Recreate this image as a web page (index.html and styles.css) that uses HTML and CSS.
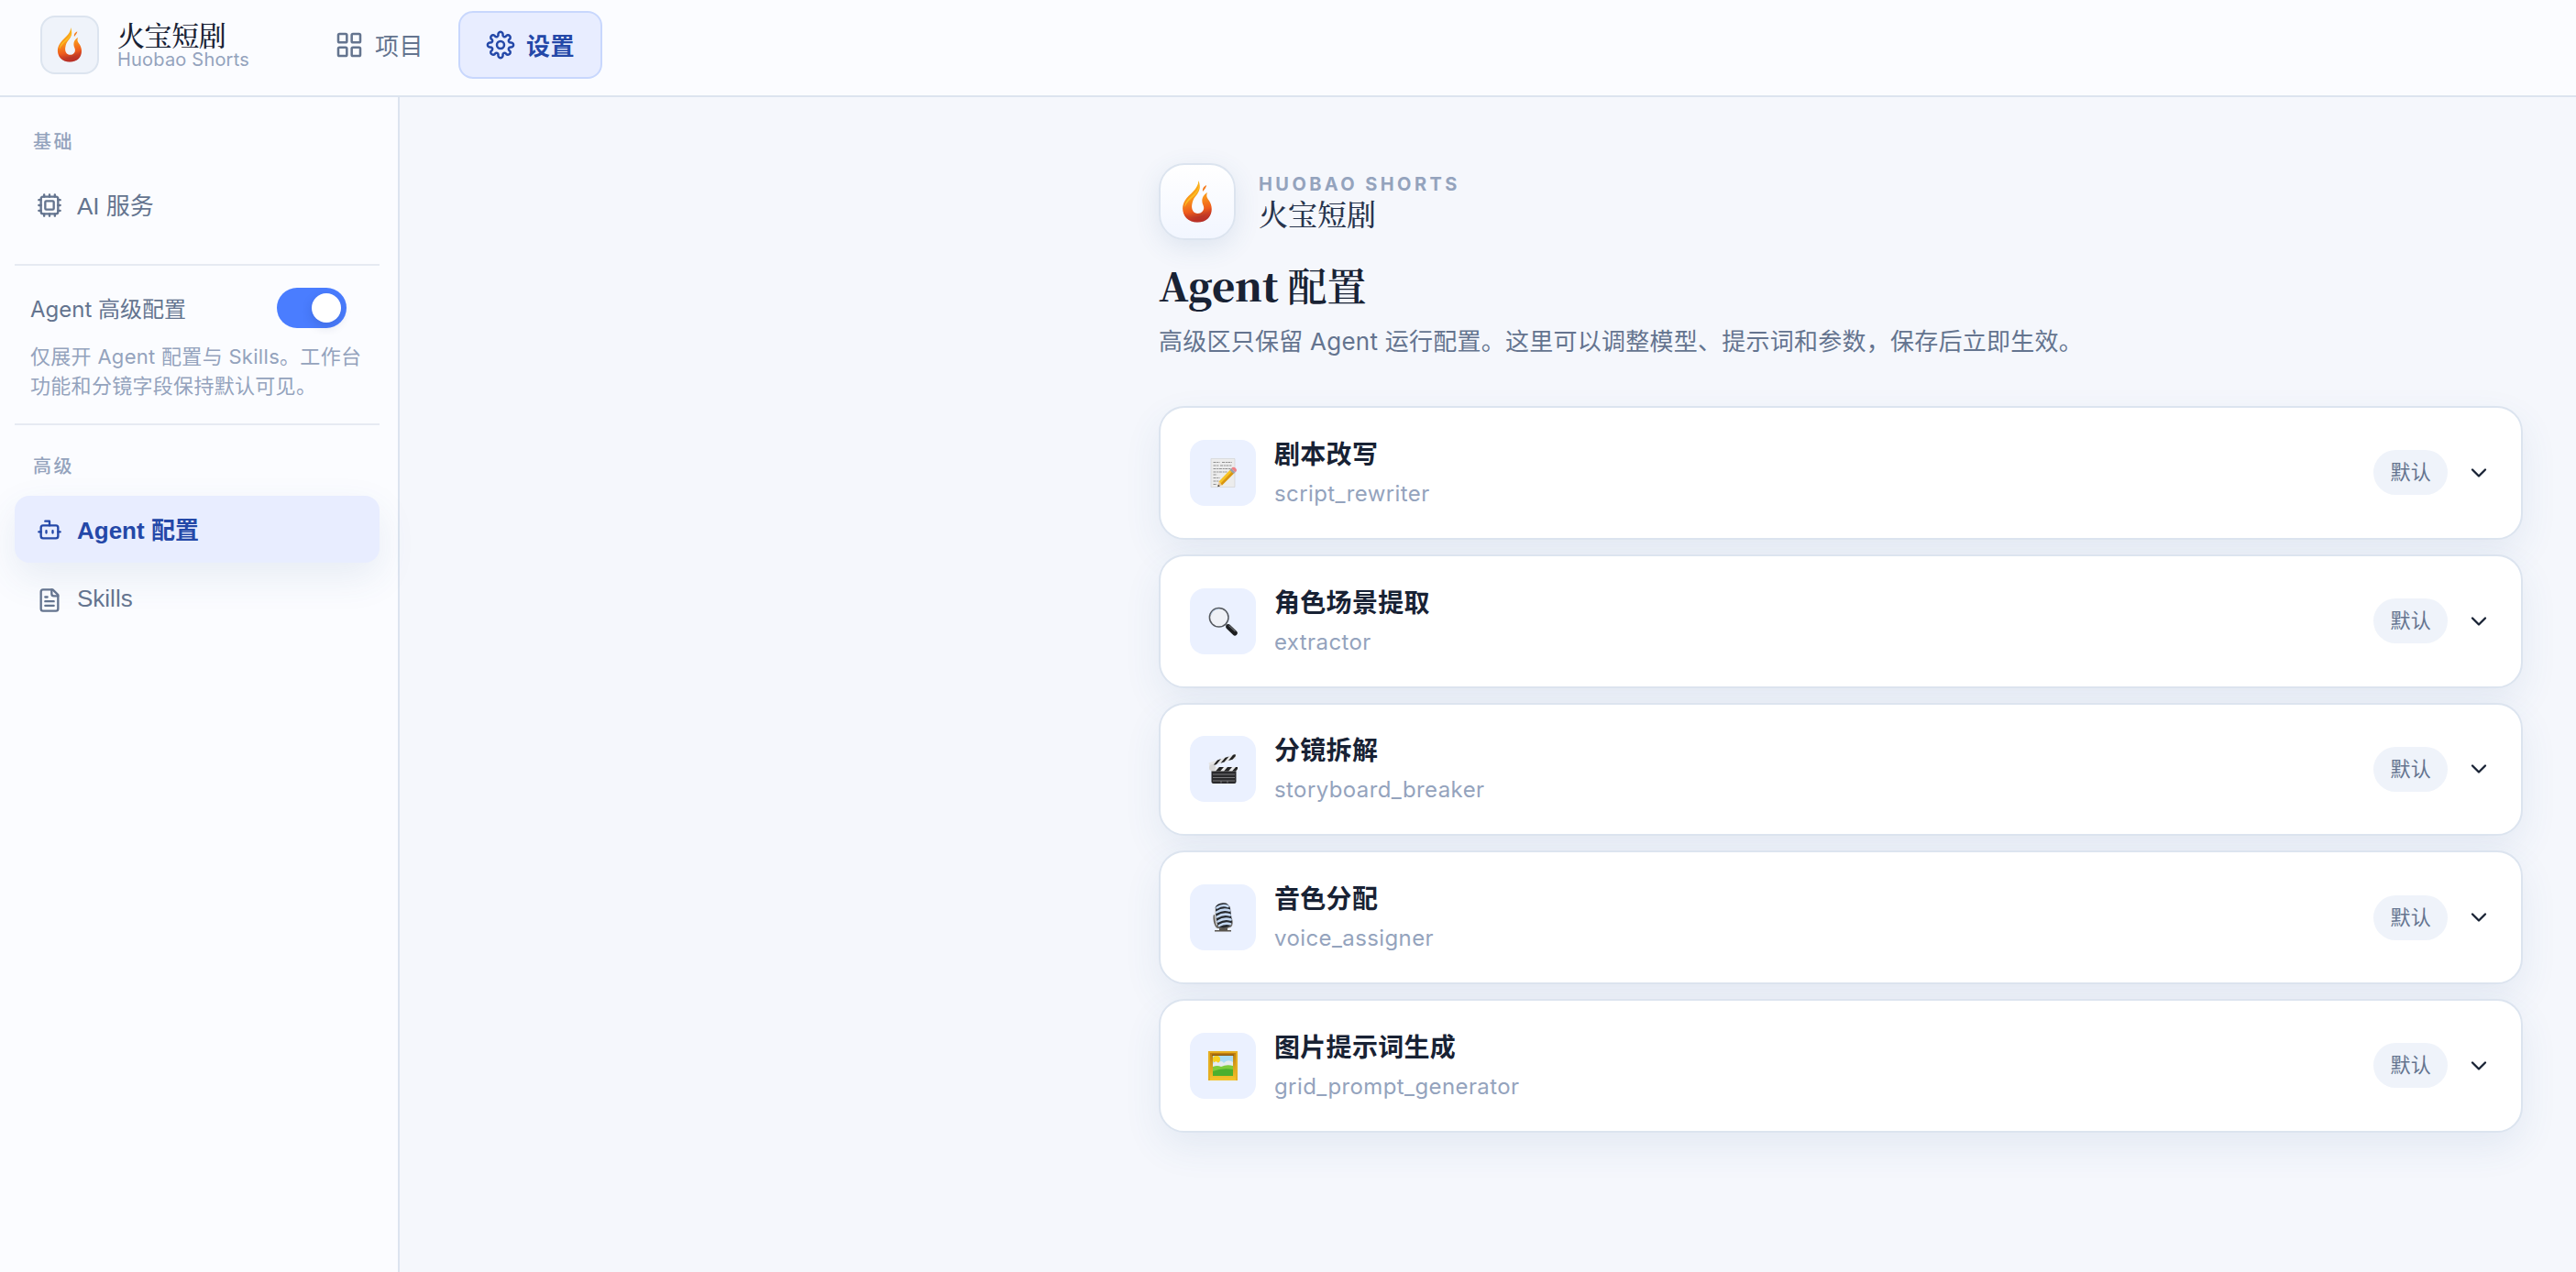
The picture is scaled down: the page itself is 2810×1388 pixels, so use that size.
FILE: index.html
```html
<!DOCTYPE html>
<html lang="zh-CN">
<head>
    <meta charset="UTF-8">
    <meta name="viewport" content="width=device-width, initial-scale=1.0">
    <title>火宝短剧</title>
    <link rel="stylesheet" href="styles.css">
</head>
<body>
    <!-- 公用图标 -->
    <svg class="sprite" width="0" height="0">
        <defs>
            <linearGradient id="fire" x1="0" y1="0" x2="0.15" y2="1">
                <stop offset="0" stop-color="#f9b916"/>
                <stop offset="0.5" stop-color="#f9921a"/>
                <stop offset="0.78" stop-color="#ee5a1c"/>
                <stop offset="1" stop-color="#a52a2c"/>
            </linearGradient>
            <linearGradient id="gold" x1="0" y1="0" x2="0" y2="1">
                <stop offset="0" stop-color="#b9780f"/>
                <stop offset="1" stop-color="#f5c52a"/>
            </linearGradient>
            <symbol id="flame" viewBox="0 0 34 46">
                <path fill="url(#fire)" d="M18.5 0C20 5 20.500 9 18 13C16 17 12.500 19 11.500 25C10 31 12.500 36 17.500 36C23 36 25.500 31 23.500 27C21.500 23 21.500 17 28 13C26.500 17 27.500 19 30 22C36 31 32.500 45.500 17 45.500C3 45.500-2.500 32 3.500 22C8 14.500 18 10 18.500 0Z"/>
                <path fill="#fbbd22" d="M18.500 2C19.500 9 15 13 10.500 17C6 21 3 25 3.500 29C6 22 12 19 15.500 15C19 11 20 7 18.500 2Z"/>
                <path fill="#f47a1c" d="M27 5C27 7 25.500 9 23 12C22.500 9 23.500 7 27 5Z"/>
                <path fill="#d93c1d" d="M2 34C6 41 14 43 22 40C27 38 31 34 32 29C33 39 27 45.500 17 45.500C9 45.500 3.500 41 2 34Z" opacity="0.4"/>
            </symbol>
            <symbol id="chevron" viewBox="0 0 24 24">
                <path d="m6 9 6 6 6-6"/>
            </symbol>
        </defs>
    </svg>

    <header class="topbar">
        <div class="brand">
            <div class="brand-logo"><svg class="flame-sm"><use href="#flame"/></svg></div>
            <div class="brand-text">
                <span class="brand-name">火宝短剧</span>
                <span class="brand-sub">Huobao Shorts</span>
            </div>
        </div>
        <nav class="nav">
            <a class="nav-item">
                <svg class="icon" viewBox="0 0 24 24"><rect x="3" y="3" width="7" height="7" rx="1"/><rect x="14" y="3" width="7" height="7" rx="1"/><rect x="14" y="14" width="7" height="7" rx="1"/><rect x="3" y="14" width="7" height="7" rx="1"/></svg>
                <span>项目</span>
            </a>
            <a class="nav-item active">
                <svg class="icon gear" viewBox="-16 -16 32 32"><path d="M-2.47-10.72A2.6 2.6 0 1 1 2.47-10.72A2 2 0 0 0 5.83-9.33A2.6 2.6 0 1 1 9.33-5.83A2 2 0 0 0 10.72-2.47A2.6 2.6 0 1 1 10.72 2.47A2 2 0 0 0 9.33 5.83A2.6 2.6 0 1 1 5.83 9.33A2 2 0 0 0 2.47 10.72A2.6 2.6 0 1 1-2.47 10.72A2 2 0 0 0-5.83 9.33A2.6 2.6 0 1 1-9.33 5.83A2 2 0 0 0-10.72 2.47A2.6 2.6 0 1 1-10.72-2.47A2 2 0 0 0-9.33-5.83A2.6 2.6 0 1 1-5.83-9.33A2 2 0 0 0-2.47-10.72Z"/><circle r="4"/></svg>
                <span>设置</span>
            </a>
        </nav>
    </header>

    <div class="layout">
        <aside class="sidebar">
            <div class="side-label">基础</div>
            <a class="side-item">
                <svg class="icon" viewBox="0 0 24 24"><rect x="4" y="4" width="16" height="16" rx="2"/><rect x="8" y="8" width="8" height="8" rx="1"/><path d="M12 2v2M7 2v2M17 2v2M12 20v2M7 20v2M17 20v2M2 12h2M2 7h2M2 17h2M20 12h2M20 7h2M20 17h2"/></svg>
                <span>AI 服务</span>
            </a>
            <div class="advanced">
                <div class="advanced-row">
                    <span class="advanced-title">Agent 高级配置</span>
                    <span class="switch"><span class="knob"></span></span>
                </div>
                <p class="advanced-desc">仅展开 Agent 配置与 Skills。工作台<br>功能和分镜字段保持默认可见。</p>
            </div>
            <div class="side-label">高级</div>
            <a class="side-item active">
                <svg class="icon" viewBox="0 0 24 24"><path d="M12 8V4H8"/><rect x="4" y="8" width="16" height="12" rx="2"/><path d="M2 14h2M20 14h2M15 13v2M9 13v2"/></svg>
                <span>Agent 配置</span>
            </a>
            <a class="side-item">
                <svg class="icon" viewBox="0 0 24 24"><path d="M15 2H6a2 2 0 0 0-2 2v16a2 2 0 0 0 2 2h12a2 2 0 0 0 2-2V7Z"/><path d="M14 2v4a2 2 0 0 0 2 2h4M10 9H8M16 13H8M16 17H8"/></svg>
                <span>Skills</span>
            </a>
        </aside>

        <main class="main">
            <div class="content">
                <div class="hero">
                    <div class="hero-logo"><svg class="flame-lg"><use href="#flame"/></svg></div>
                    <div class="hero-text">
                        <span class="hero-kicker">HUOBAO SHORTS</span>
                        <span class="hero-name">火宝短剧</span>
                    </div>
                </div>
                <h1 class="title"><span class="title-latin">Agent</span><span class="title-cjk">配置</span></h1>
                <p class="desc">高级区只保留 Agent 运行配置。这里可以调整模型、提示词和参数，保存后立即生效。</p>

                <div class="cards">
                    <div class="card">
                        <div class="card-icon">
                            <svg class="emoji" viewBox="0 0 32 32"><path fill="#ececec" stroke="#cfcfcf" stroke-width=".6" d="M3 .5h26v31H3z"/><path stroke="#8f8f8f" stroke-width="1" stroke-dasharray="3 .8 2 .6" d="M5.500 4.500h7M15 4.500h11M5.500 8h6M13 8h13M5.500 11.500h20M5.500 15h15M5.500 18h4M5.500 21.500h7M5.500 25h6M5.500 28.500h4"/><path fill="#f7c325" d="m11.500 25.500 13-13.500 4 4-13.500 13.500z"/><path fill="#d99512" d="m13.500 27.500 13-13.500 2 2-13.500 13.500z"/><path fill="#e9c79a" d="m11.500 25.500-1 5.500 4.500-1.500z"/><path fill="#333" d="m10.900 28.800-.6 2.500 2.400-.8z"/><path fill="#9ba0a8" d="m23.500 13 1.800-2 4.200 4.200-2 1.900z"/><path fill="#ef8087" d="m25.300 11 1-1c2-1.500 6 2 4.300 4.200l-1.100 1z"/></svg>
                        </div>
                        <div class="card-text"><span class="card-title">剧本改写</span><span class="card-key">script_rewriter</span></div>
                        <span class="badge">默认</span>
                        <svg class="chevron"><use href="#chevron"/></svg>
                    </div>
                    <div class="card">
                        <div class="card-icon">
                            <svg class="emoji" viewBox="0 0 32 32"><path stroke="#8b8f94" stroke-width="2.500" d="m19 19 3 3"/><path stroke="#1c1d1f" stroke-width="5.500" stroke-linecap="round" d="m22 22 7 6.800"/><path stroke="#65686c" stroke-width="1.200" d="m22.500 20.500 7 6.500"/><circle cx="11.700" cy="11.800" r="10.300" fill="#eff1f6" stroke="#55595f" stroke-width="1.500"/><path fill="none" stroke="#a7c2df" stroke-width=".8" d="M3 9a9.200 9.200 0 0 1 9-6.500"/></svg>
                        </div>
                        <div class="card-text"><span class="card-title">角色场景提取</span><span class="card-key">extractor</span></div>
                        <span class="badge">默认</span>
                        <svg class="chevron"><use href="#chevron"/></svg>
                    </div>
                    <div class="card">
                        <div class="card-icon">
                            <svg class="emoji" viewBox="0 0 32 32"><path fill="#29292b" d="M3.500 18h27v12q0 2-2 2h-23q-2 0-2-2z"/><path stroke="#8d8d8f" stroke-width=".8" d="M5 22h24M5 25.500h24M5 29h24M14 29v2.500M21 29v2.500"/><path fill="#e9e9e9" d="M1 14h31v4.500H3.500L1 17z"/><path fill="#222" d="m8 18.500 4-4.500h5l-4 4.500zM17 18.500l4-4.500h5l-4 4.500zM26 18.500l4-4.500h2v2l-2 2.500z"/><path fill="#e4e4e4" d="M.5 9.500 29.500 0l.8 4.500L1.500 13.500z"/><path fill="#222" d="m5 12.400 5-6 4-1.300-5 6zM13.500 9.700l5-6 4-1.300-5 6zM22 7l5-6.200 2.500-.8.4 1.900-3.400 3.800z"/><circle cx="4.500" cy="14.500" r="3.500" fill="#d6d6d6"/></svg>
                        </div>
                        <div class="card-text"><span class="card-title">分镜拆解</span><span class="card-key">storyboard_breaker</span></div>
                        <span class="badge">默认</span>
                        <svg class="chevron"><use href="#chevron"/></svg>
                    </div>
                    <div class="card">
                        <div class="card-icon">
                            <svg class="emoji" viewBox="0 0 32 32"><path fill="#59554f" d="M12 26h9v4h4v1.500H7V30h5z"/><path fill="#6b6761" d="M6 13c-1.500 3 0 12 3 14.500 4 1.500 12 1 16-1 2-2 2-6 1-9z"/><rect x="8" y=".5" width="17" height="27" rx="7" fill="#25282d" transform="rotate(-8 16 14)"/><path fill="none" stroke="#c3d7f0" stroke-width="2.600" stroke-linecap="round" d="M9.500 5.500q6-4 12-1.500M9 10.500q7-4.500 14-2M9.700 15.500q7-4.500 14-2M10.500 20.500q7-4.500 14-2M12 25q6-3.500 12-1.800"/><path fill="none" stroke="#d8dadd" stroke-width="1.300" d="M7.500 5.500C7 10 8 20 9.500 24.500"/></svg>
                        </div>
                        <div class="card-text"><span class="card-title">音色分配</span><span class="card-key">voice_assigner</span></div>
                        <span class="badge">默认</span>
                        <svg class="chevron"><use href="#chevron"/></svg>
                    </div>
                    <div class="card">
                        <div class="card-icon">
                            <svg class="emoji" viewBox="0 0 32 32"><path fill="url(#gold)" d="M0 0h32v32H0z"/><path fill="#e6ae20" d="M0 0h32v2H0zM0 0h2v32H0zM30 0h2v32h-2z"/><path fill="#8f5a0c" d="M4 3.500h24v1.500H4z"/><path fill="#a9dcf5" d="M5 5h22v22H5z"/><circle cx="9" cy="9" r="4" fill="#f8cf1c"/><path fill="#e6eaee" d="M5 14q3-5 6-1 3-4 6 0 4-5 10-1v6H5z"/><path fill="#7ccb3c" d="M5 17q5-2 9 0 6-3 13-1v11H5z"/><path fill="#4caf2e" d="M5 22q10-4 22-2v7H5z"/></svg>
                        </div>
                        <div class="card-text"><span class="card-title">图片提示词生成</span><span class="card-key">grid_prompt_generator</span></div>
                        <span class="badge">默认</span>
                        <svg class="chevron"><use href="#chevron"/></svg>
                    </div>
                </div>
            </div>
        </main>
    </div>
</body>
</html>
```
FILE: styles.css
```css
* {
    box-sizing: border-box;
}

body {
    margin: 0;
    height: 1388px;
    display: flex;
    flex-direction: column;
    overflow: hidden;
    background: #f5f7fc;
    color: #182234;
    font-family: Inter, "Noto Sans CJK SC", sans-serif;
}

.sprite {
    position: absolute;
}

.icon {
    flex: none;
    width: 28px;
    height: 28px;
    fill: none;
    stroke: currentColor;
    stroke-width: 2;
    stroke-linecap: round;
    stroke-linejoin: round;
}

/* 顶部导航 */
.topbar {
    flex: none;
    height: 106px;
    display: flex;
    align-items: center;
    padding: 0 44px 6px;
    background: #fbfcff;
    border-bottom: 2px solid #dce4ef;
}

.brand {
    display: flex;
    align-items: center;
    gap: 20px;
    width: 291px;
}

.brand-logo {
    width: 64px;
    height: 64px;
    display: flex;
    align-items: center;
    justify-content: center;
    border: 2px solid #dce4ef;
    border-radius: 16px;
    background: #eff3fa;
}

.flame-sm {
    width: 28px;
    height: 40px;
}

.brand-text {
    display: flex;
    flex-direction: column;
}

.brand-name {
    font-family: "Noto Serif CJK SC", "Noto Sans CJK SC", serif;
    font-size: 30px;
    font-weight: 500;
    line-height: 30px;
    letter-spacing: -0.4px;
}

.brand-sub {
    padding-top: 1px;
    font-size: 20px;
    line-height: 24px;
    letter-spacing: 0.2px;
    color: #94a3bd;
}

.nav {
    display: flex;
    gap: 8px;
}

.nav-item {
    height: 74px;
    display: flex;
    align-items: center;
    gap: 12px;
    padding: 0 28px;
    border: 2px solid transparent;
    border-radius: 16px;
    font-size: 26px;
    letter-spacing: 0.5px;
    color: #64748f;
}

.nav-item span {
    padding-bottom: 2px;
}

.nav-item .icon {
    width: 32px;
    height: 32px;
    stroke-width: 1.9;
}

.nav-item .gear {
    stroke-width: 2.5;
}

.nav-item.active {
    background: #e8edff;
    border-color: #c8d7fd;
    color: #2448a8;
    font-weight: 600;
}

.layout {
    flex: 1;
    display: flex;
    min-height: 0;
}

/* 侧边栏 */
.sidebar {
    width: 436px;
    padding: 32px 20px 0 16px;
    display: flex;
    flex-direction: column;
    background: #fbfcff;
    border-right: 2px solid #dce4ef;
}

.side-label {
    height: 34px;
    padding-left: 20px;
    font-size: 20px;
    font-weight: 500;
    line-height: 34px;
    letter-spacing: 2.4px;
    color: #94a3bd;
}

.side-item {
    flex: none;
    height: 73px;
    display: flex;
    align-items: center;
    gap: 16px;
    margin-top: 15px;
    padding: 0 24px;
    border-radius: 16px;
    font-family: "Liberation Sans", "Noto Sans CJK SC", sans-serif;
    font-size: 26px;
    color: #64748f;
}

.side-item span {
    padding-bottom: 2px;
}

.side-item + .side-item {
    margin-top: 4px;
}

.side-item.active {
    background: #e8edff;
    color: #2448a8;
    font-weight: 700;
    box-shadow: 0 16px 40px rgba(60, 100, 150, 0.1);
}

.advanced {
    margin: 28px 0;
    height: 176px;
    padding: 24px 17px 0;
    border-top: 2px solid #e6eaf2;
    border-bottom: 2px solid #e6eaf2;
}

.advanced-row {
    height: 44px;
    display: flex;
    align-items: center;
    justify-content: space-between;
    padding-right: 19px;
}

.advanced-title {
    padding-bottom: 2px;
    font-size: 24px;
    color: #64748f;
}

.switch {
    width: 76px;
    height: 44px;
    padding: 6px;
    display: flex;
    justify-content: flex-end;
    border-radius: 22px;
    background: #4a7dff;
}

.knob {
    width: 32px;
    height: 32px;
    border-radius: 50%;
    background: #fff;
    box-shadow: 0 4px 12px rgba(20, 40, 90, 0.18);
}

.advanced-desc {
    margin: 15px 0 0;
    font-size: 22px;
    line-height: 32px;
    letter-spacing: 0.3px;
    white-space: nowrap;
    color: #94a3bd;
}

/* 主区域 */
.main {
    flex: 1;
    display: flex;
    justify-content: flex-end;
    padding: 72px 58px 0 0;
}

.content {
    width: 1488px;
}

.hero {
    display: flex;
    align-items: center;
    gap: 25px;
}

.hero-logo {
    width: 84px;
    height: 84px;
    display: flex;
    align-items: center;
    justify-content: center;
    border: 2px solid #dce4ef;
    border-radius: 28px;
    background: linear-gradient(#fff, #f2f6ff);
    box-shadow: 0 8px 28px rgba(60, 100, 150, 0.12);
}

.flame-lg {
    width: 34px;
    height: 46px;
}

.hero-text {
    display: flex;
    flex-direction: column;
}

.hero-kicker {
    padding-top: 1px;
    font-size: 20px;
    font-weight: 700;
    line-height: 24px;
    letter-spacing: 3.4px;
    color: #94a3bd;
}

.hero-name {
    font-family: "Noto Serif CJK SC", "Noto Sans CJK SC", serif;
    font-size: 32px;
    line-height: 39px;
    font-weight: 500;
    color: #27344d;
}

.title {
    display: flex;
    gap: 10px;
    margin: 17px 0 0;
    height: 64px;
    font-family: "Noto Serif CJK SC", "Noto Sans CJK SC", serif;
    font-size: 43px;
    line-height: 64px;
    white-space: nowrap;
}

.title-latin {
    font-weight: 900;
}

.title-cjk {
    font-weight: 600;
}

.desc {
    margin: 10px 0 0;
    height: 40px;
    font-size: 26px;
    line-height: 40px;
    letter-spacing: 0.25px;
    color: #64748f;
}

.cards {
    margin-top: 50px;
    display: flex;
    flex-direction: column;
    gap: 16px;
}

.card {
    height: 145.75px;
    display: flex;
    align-items: center;
    gap: 20px;
    padding: 0 32px;
    border: 2px solid #dce4ef;
    border-radius: 28px;
    background: #fff;
    box-shadow: 0 16px 40px rgba(60, 100, 150, 0.09);
}

.card-icon {
    width: 72px;
    height: 72px;
    display: flex;
    align-items: center;
    justify-content: center;
    border-radius: 16px;
    background: #ebf1ff;
}

.emoji {
    width: 32px;
    height: 32px;
    fill: none;
}

.card-text {
    flex: 1;
    display: flex;
    flex-direction: column;
    gap: 6px;
    padding-top: 2px;
}

.card-title {
    font-size: 28px;
    font-weight: 600;
    line-height: 38px;
    letter-spacing: 0.3px;
}

.card-key {
    font-size: 24px;
    line-height: 36px;
    letter-spacing: 0.4px;
    color: #94a3bd;
}

.badge {
    height: 49px;
    padding: 0 18px;
    border-radius: 25px;
    background: #eff3fa;
    font-size: 22px;
    line-height: 49px;
    letter-spacing: 0.3px;
    color: #64748f;
}

.chevron {
    width: 28px;
    height: 28px;
    fill: none;
    stroke: #182234;
    stroke-width: 2;
    stroke-linecap: round;
    stroke-linejoin: round;
}
```
